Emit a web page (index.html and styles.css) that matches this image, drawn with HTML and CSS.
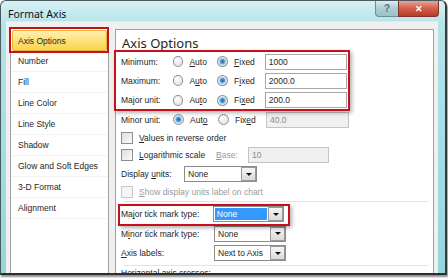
FILE: index.html
```html
<!DOCTYPE HTML>
<html>

<head>
    <link rel="stylesheet" href="styles.css">
</head>

<body>
    <div class="window">
        <div class="titlebar">
            <span class="title">Format Axis</span>
            <div class="caption">
                <span class="help">?</span>
                <span class="close">&#10005;</span>
            </div>
        </div>

        <div class="client">
            <div class="nav">
                <div class="item selected">Axis Options</div>
                <div class="item">Number</div>
                <div class="item">Fill</div>
                <div class="item">Line Color</div>
                <div class="item">Line Style</div>
                <div class="item">Shadow</div>
                <div class="item">Glow and Soft Edges</div>
                <div class="item">3-D Format</div>
                <div class="item">Alignment</div>
            </div>

            <div class="pane">
                <div class="heading">Axis Options</div>

                <div class="group mark-a">
                    <div class="row">
                        <span class="label">Minimum:</span>
                        <span class="radio"></span>
                        <span class="opt"><u>A</u>uto</span>
                        <span class="radio on"></span>
                        <span class="opt"><u>F</u>ixed</span>
                        <span class="field">1000</span>
                    </div>
                    <div class="row">
                        <span class="label">Maximum:</span>
                        <span class="radio"></span>
                        <span class="opt">A<u>u</u>to</span>
                        <span class="radio on"></span>
                        <span class="opt">F<u>i</u>xed</span>
                        <span class="field">2000.0</span>
                    </div>
                    <div class="row">
                        <span class="label">Major unit:</span>
                        <span class="radio"></span>
                        <span class="opt">Au<u>t</u>o</span>
                        <span class="radio on"></span>
                        <span class="opt">Fi<u>x</u>ed</span>
                        <span class="field">200.0</span>
                    </div>
                </div>
                <div class="row">
                    <span class="label">Minor unit:</span>
                    <span class="radio on"></span>
                    <span class="opt">Aut<u>o</u></span>
                    <span class="radio"></span>
                    <span class="opt">Fix<u>e</u>d</span>
                    <span class="field off">40.0</span>
                </div>

                <div class="check-row">
                    <span class="check"></span>
                    <span><u>V</u>alues in reverse order</span>
                </div>
                <div class="check-row">
                    <span class="check"></span>
                    <span class="log-label"><u>L</u>ogarithmic scale</span>
                    <span class="base"><u>B</u>ase:</span>
                    <span class="field off base-field">10</span>
                </div>
                <div class="units-row">
                    <span class="units-label">Display <u>u</u>nits:</span>
                    <span class="select units-select"><span class="value">None</span><span class="drop"></span></span>
                </div>
                <div class="check-row show-row disabled">
                    <span class="check"></span>
                    <span><u>S</u>how display units label on chart</span>
                </div>

                <div class="sep"></div>

                <div class="tick-row first mark-b">
                    <span class="tick-label">Ma<u>j</u>or tick mark type:</span>
                    <span class="select"><span class="value picked">None</span><span class="drop"></span></span>
                </div>
                <div class="tick-row">
                    <span class="tick-label">M<u>i</u>nor tick mark type:</span>
                    <span class="select"><span class="value">None</span><span class="drop"></span></span>
                </div>
                <div class="tick-row">
                    <span class="tick-label"><u>A</u>xis labels:</span>
                    <span class="select"><span class="value">Next to Axis</span><span class="drop"></span></span>
                </div>

                <div class="sep"></div>
                <div class="cut">Horizontal axis crosses:</div>
            </div>
        </div>
    </div>
</body>

</html>
```

FILE: styles.css
```css
html,
body {
    margin: 0;
    padding: 0;
}

body {
    width: 448px;
    height: 278px;
    overflow: hidden;
    background: #ffffff;
    font-family: "Liberation Sans", Arial, sans-serif;
    font-size: 8.5px;
    color: #262626;
}

u {
    text-decoration-thickness: 1px;
    text-underline-offset: 1px;
}

/* window frame */

.window {
    width: 444px;
    height: 272px;
    border: 1px solid #4a5a5e;
    border-bottom: 2px solid #2e2e2e;
    border-right: 2px solid #3a3a3a;
    border-radius: 6px 6px 0 0;
    background: linear-gradient(to bottom, #d6f1f4 0, #b4e4ea 24px, #94d6de 100%);
    box-shadow: 1px 2px 2px rgba(0, 0, 0, 0.45);
    display: flex;
    flex-direction: column;
    overflow: hidden;
}

.titlebar {
    height: 23px;
    display: flex;
    justify-content: space-between;
    align-items: flex-start;
    padding-left: 7px;
}

.title {
    margin-top: 6px;
    font-family: "Noto Sans", sans-serif;
    font-size: 10.5px;
    color: #111111;
}

.caption {
    display: flex;
    margin-right: 6px;
}

.help,
.close {
    height: 15px;
    display: flex;
    align-items: center;
    justify-content: center;
    border: 1px solid #6b8f96;
    border-top: none;
}

.help {
    width: 22px;
    border-radius: 0 0 0 4px;
    border-right: none;
    background: linear-gradient(to bottom, #d9eef1, #a9cdd3 50%, #98c3ca);
    color: #5b6f73;
    font-weight: bold;
    font-size: 10px;
}

.close {
    width: 39px;
    border-radius: 0 0 4px 0;
    border-color: #7d3328;
    background: linear-gradient(to bottom, #e8a497, #d0604b 50%, #bb3a24);
    color: #ffffff;
    font-size: 9px;
    font-weight: bold;
}

.client {
    flex: 1;
    margin: 0 7px 0 5px;
    background: #f0f0f0;
    border-top: 1px solid #dfe8ea;
    display: flex;
    gap: 6px;
    padding: 5px 4px 0 4px;
}

/* category list */

.nav {
    width: 97px;
    background: #ffffff;
    border: 1px solid #a0a0a0;
    border-bottom: none;
    padding-top: 1px;
    display: flex;
    flex-direction: column;
}

.item {
    height: 21px;
    box-sizing: border-box;
    padding-left: 7px;
    display: flex;
    align-items: center;
    border-bottom: 1px solid #f3f3f3;
}

.item.selected {
    position: relative;
    margin: 1px 1px 0 1px;
    padding-left: 5px;
    border: 1px solid #e3b33c;
    border-radius: 2px;
    background: linear-gradient(to bottom, #fff0b2, #fde27a 50%, #fbd351);
}

.item.selected::after {
    content: "";
    position: absolute;
    left: -4px;
    top: -4px;
    right: -3px;
    bottom: -3px;
    border: 2px solid #c8101a;
}

/* options pane */

.pane {
    flex: 1;
    background: #ffffff;
    border: 1px solid #a0a0a0;
    border-bottom: none;
    margin-top: 2px;
    padding: 4px 0 0 5px;
}

.heading {
    font-family: "Noto Sans", sans-serif;
    font-size: 13px;
    line-height: 18px;
    color: #1f1f1f;
    padding-left: 1px;
}

.group {
    position: relative;
    width: 226px;
}

.mark-a::after {
    content: "";
    position: absolute;
    left: -7px;
    top: -2px;
    right: -3px;
    bottom: -1px;
    border: 2px solid #c8101a;
    box-shadow: 2px 2px 4px rgba(0, 0, 0, 0.3);
}

.row {
    height: 19.33px;
    display: flex;
    align-items: center;
}

.label {
    width: 52px;
}

.radio {
    width: 9px;
    height: 9px;
    border: 1px solid #8f8f8f;
    border-radius: 50%;
    background: radial-gradient(circle at 40% 35%, #ffffff, #dcdcdc);
    margin-right: 6px;
}

.radio.on {
    background: radial-gradient(circle, #1d64b6 0, #4a9be0 2px, #9fd0f2 3px, #e8e8e8 4px, #f4f4f4);
}

.opt {
    width: 28px;
}

.opt + .radio + .opt {
    width: 32px;
}

.field {
    width: 78px;
    height: 14px;
    border: 1px solid #a8a8a8;
    background: #ffffff;
    display: flex;
    align-items: center;
    padding-left: 3px;
    box-sizing: content-box;
    margin-left: -1px;
}

.field.off {
    background: #f0f0f0;
    border-color: #c4c4c4;
    color: #8a8a8a;
}

.check-row {
    height: 17px;
    display: flex;
    align-items: center;
}

.check {
    width: 10px;
    height: 10px;
    border: 1px solid #8e8f8f;
    background: linear-gradient(135deg, #dedede, #fbfbfb);
    margin-right: 6px;
}

.log-label {
    width: 77px;
}

.base {
    width: 32px;
    color: #9a9a9a;
}

.base-field {
    width: 76px;
    margin-left: 0;
}

.units-row {
    height: 22px;
    display: flex;
    align-items: center;
}

.units-label {
    width: 63px;
}

.select {
    width: 69px;
    height: 14px;
    border: 1px solid #8c8c8c;
    background: #ffffff;
    display: flex;
    align-items: center;
    padding: 0 0 0 1px;
}

.units-select {
    width: 70px;
}

.value {
    flex: 1;
    height: 12px;
    display: flex;
    align-items: center;
    padding-left: 2px;
}

.value.picked {
    background: #3399ff;
    color: #ffffff;
    margin-right: 1px;
}

.drop {
    width: 13px;
    height: 12px;
    border: 1px solid #9a9a9a;
    background: linear-gradient(to bottom, #f6f6f6, #dadada);
    display: flex;
    align-items: center;
    justify-content: center;
}

.drop::before {
    content: "";
    border-left: 3px solid transparent;
    border-right: 3px solid transparent;
    border-top: 3px solid #111111;
}

.show-row {
    height: 14px;
}

.disabled {
    color: #9c9c9c;
}

.disabled .check {
    border-color: #c9c9c9;
    background: #f6f6f6;
}

.sep {
    height: 1px;
    background: #e3e3e3;
    margin: 2px 5px 0 3px;
}

.tick-row {
    height: 19.33px;
    display: flex;
    align-items: center;
}

.tick-row.first {
    margin-top: 2.5px;
}

.mark-b {
    position: relative;
    width: 163px;
}

.mark-b::after {
    content: "";
    position: absolute;
    left: -3px;
    top: -1px;
    right: -6px;
    bottom: -2px;
    border: 2px solid #c8101a;
    box-shadow: 2px 2px 4px rgba(0, 0, 0, 0.3);
}

.tick-label {
    width: 93px;
}

.cut {
    padding-top: 2px;
    line-height: 10px;
}
```
